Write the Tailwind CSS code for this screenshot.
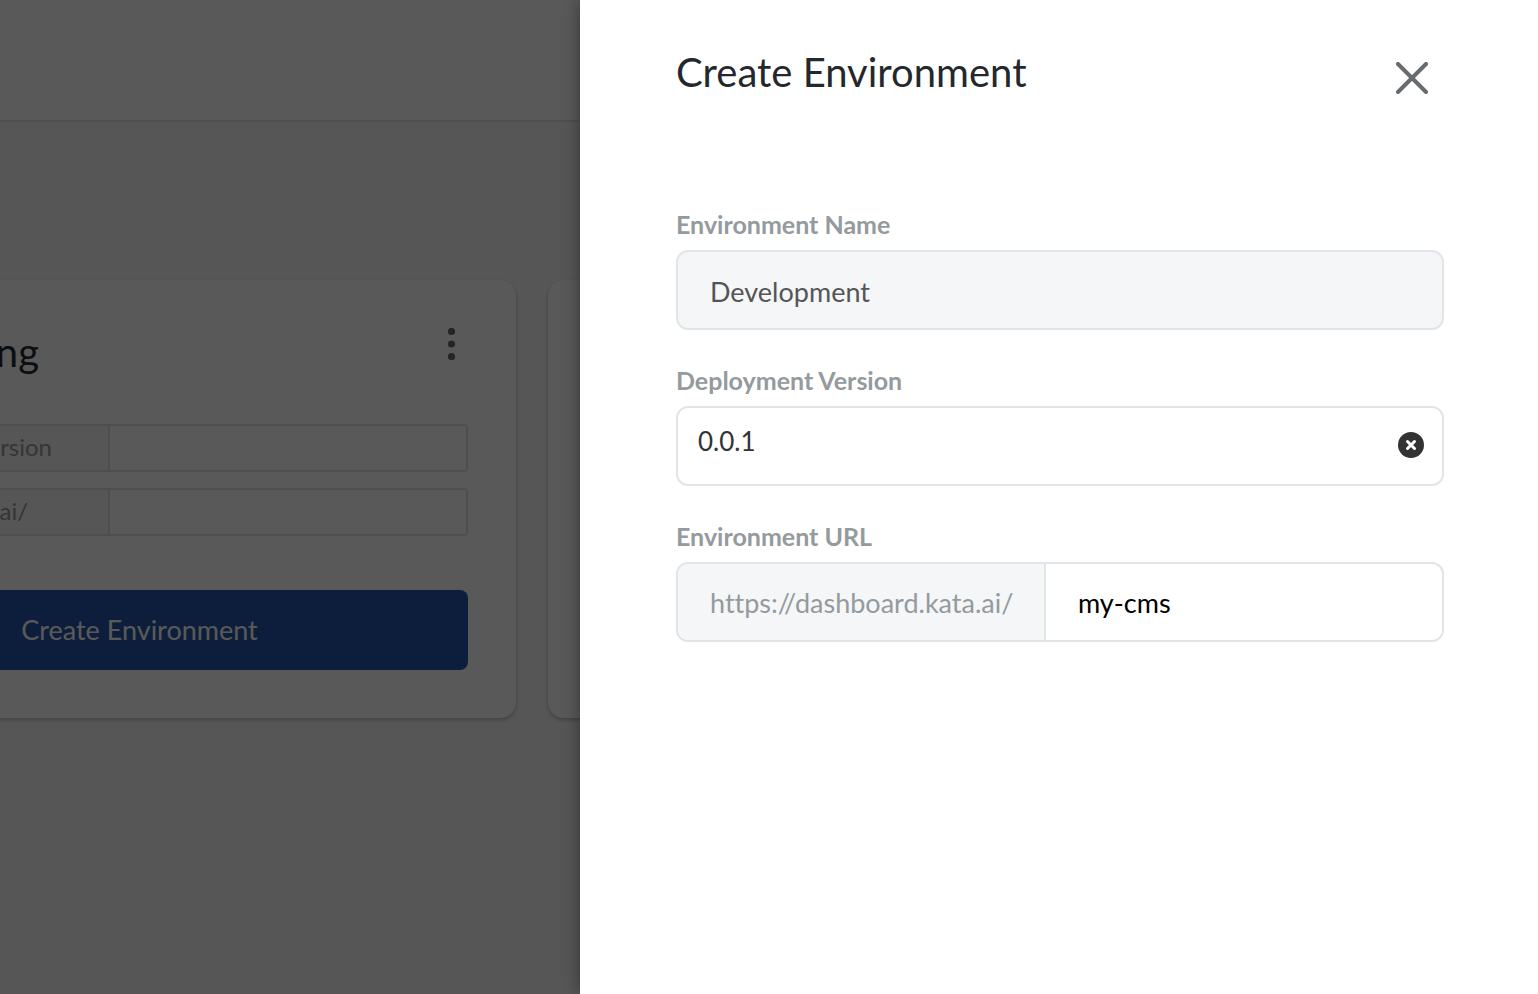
<!DOCTYPE html>
<html lang="en">
<head>
<meta charset="utf-8">
<meta name="viewport" content="width=device-width, initial-scale=1">
<title>Create Environment</title>
<script src="https://cdn.jsdelivr.net/npm/@tailwindcss/browser@4"></script>
</head>
<body class="relative h-screen overflow-hidden bg-[#f6f7f8] font-['Lato',sans-serif] text-[#24282d] [font-variant-ligatures:none]">

  <!-- Page behind the drawer -->
  <div class="h-full overflow-hidden">
    <header class="h-[122px] border-b-2 border-[#dfe2e4] bg-white"></header>
    <main class="-ml-[237px] flex gap-8 pt-[158px]">
      <section class="w-[753px] shrink-0 rounded-2xl bg-white p-12 shadow-[0_2px_4px_rgba(0,0,0,0.25)]">
        <div class="flex h-24 items-start justify-between">
          <h2 class="w-[228px] text-right text-[40px] leading-[48px]">Staging</h2>
          <button type="button" aria-label="Environment menu" class="w-8 text-[#676b6d]">
            <svg class="h-8 w-8" viewBox="0 0 32 32" fill="currentColor"><circle cx="15.5" cy="3.5" r="3.6"/><circle cx="15.5" cy="16" r="3.6"/><circle cx="15.5" cy="28.5" r="3.6"/></svg>
          </button>
        </div>
        <div class="flex flex-col gap-4 text-2xl text-[#949a9d]">
          <div class="flex h-12 overflow-hidden rounded border-2 border-[#dfe2e4]">
            <label for="card-version" class="w-[297px] shrink-0 border-r-2 border-[#dfe2e4] bg-[#f5f6f8] pr-14 text-right leading-[42px]">Version</label>
            <input id="card-version" class="min-w-0 flex-1 px-4" readonly>
          </div>
          <div class="flex h-12 overflow-hidden rounded border-2 border-[#dfe2e4]">
            <label for="card-url" class="w-[297px] shrink-0 border-r-2 border-[#dfe2e4] bg-[#f5f6f8] pr-20 text-right leading-[42px]">kata.ai/</label>
            <input id="card-url" class="min-w-0 flex-1 px-4" readonly>
          </div>
        </div>
        <button type="button" class="mt-[54px] h-20 w-full rounded-lg bg-[#2556ab] text-[27px] text-white">Create Environment</button>
      </section>
      <section class="w-[753px] shrink-0 rounded-2xl bg-white shadow-[0_2px_4px_rgba(0,0,0,0.25)]"></section>
    </main>
  </div>

  <div class="absolute inset-0 bg-black/65"></div>

  <!-- Drawer -->
  <aside role="dialog" aria-labelledby="drawer-title" class="absolute inset-y-0 right-0 w-[958px] bg-white pt-12 pr-[94px] pl-24 shadow-[0_0_16px_rgba(0,0,0,0.4)]">
    <div class="flex h-[50px] items-start justify-between pr-4">
      <h1 id="drawer-title" class="text-[40px] leading-[48px]">Create Environment</h1>
      <button type="button" aria-label="Close" class="mt-3.5 text-[#676b6d]">
        <svg class="h-8 w-8" viewBox="0 0 32 32" fill="none" stroke="currentColor" stroke-width="4" stroke-linecap="round"><path d="M2 2 30 30M30 2 2 30"/></svg>
      </button>
    </div>
    <form class="mt-27 flex flex-col gap-8 text-[27px]">
      <div>
        <label for="env-name" class="mb-2 block text-[25px] leading-9 font-bold text-[#949a9d]">Environment Name</label>
        <input id="env-name" value="Development" readonly class="block h-20 w-full rounded-xl border-2 border-[#e1e5e8] bg-[#f5f6f8] px-8 pt-0.5 text-[#555]">
      </div>
      <div>
        <label for="env-version" class="mb-2 block text-[25px] leading-9 font-bold text-[#949a9d]">Deployment Version</label>
        <div class="flex h-20 items-center rounded-xl border-2 border-[#e1e5e8] pr-[18px] pb-0.5 pl-5">
          <input id="env-version" value="0.0.1" class="mb-2 min-w-0 flex-1 text-[26px] text-[#333]">
          <button type="button" aria-label="Clear version">
            <svg class="h-[26px] w-[26px]" viewBox="0 0 26 26"><circle cx="13" cy="13" r="13" fill="#333"/><path d="m9.500 9.500 7 7m0-7-7 7" stroke="#fff" stroke-width="3" stroke-linecap="round"/></svg>
          </button>
        </div>
      </div>
      <div>
        <label for="env-url" class="mb-2 block text-[25px] leading-9 font-bold text-[#949a9d]">Environment URL</label>
        <div class="flex h-20 overflow-hidden rounded-xl border-2 border-[#e1e5e8]">
          <span class="flex w-[368px] shrink-0 items-center border-r-2 border-[#e1e5e8] bg-[#f5f6f8] pt-0.5 pl-8 text-[#949a9d]">https://dashboard.kata.ai/</span>
          <input id="env-url" value="my-cms" class="min-w-0 flex-1 px-8 pt-0.5 text-black">
        </div>
      </div>
    </form>
  </aside>
</body>
</html>
